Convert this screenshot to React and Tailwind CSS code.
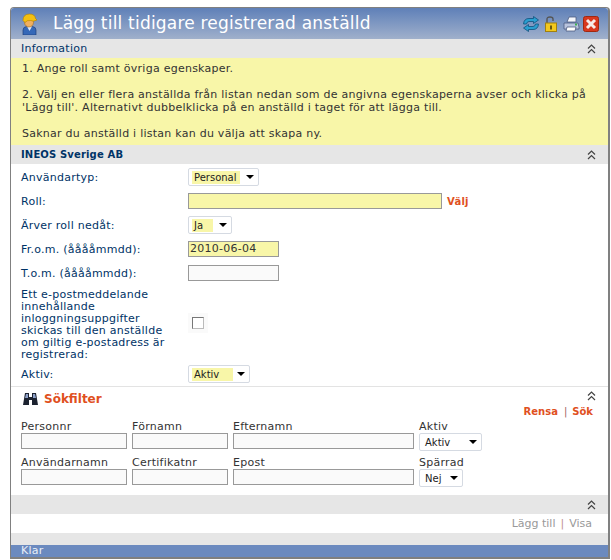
import React from "react";

const Collapse = () => (
  <svg width="9" height="10" viewBox="0 0 9 10" className="block" fill="none" stroke="#444" strokeWidth="1.2">
    <path d="M1 4.5 L4.5 1 L8 4.5" />
    <path d="M1 9 L4.5 5.5 L8 9" />
  </svg>
);

const SectionHead = ({ children, bold }) => (
  <div className={`h-[19px] shrink-0 bg-[#e6e6e6] flex items-center justify-between pl-[10px] pr-[12px] text-[#003366] ${bold ? "font-bold text-[10px] tracking-[0.15px]" : ""}`}>
    <span>{children}</span>
    <Collapse />
  </div>
);

const Worker = () => (
  <svg width="15" height="22" viewBox="0 0 15 22" className="block">
    <path d="M1 22 V17 Q1 14 4.5 13.5 L7.5 16 L10.5 13.5 Q14 14 14 17 V22 Z" fill="#3568b8" stroke="#1f3f78" strokeWidth="0.7" />
    <path d="M5 13.5 L7.5 18 L10 13.5 Z" fill="#dfe8f5" />
    <ellipse cx="7" cy="9.5" rx="4.5" ry="4.5" fill="#f0b060" stroke="#a06820" strokeWidth="0.6" />
    <path d="M1 7.5 Q1 1 7.5 1 Q13 1 13.5 5.5 L15 7 Q11.5 9 8.5 7.5 Q5 7 3 9.5 Z" fill="#f5c010" stroke="#b08000" strokeWidth="0.6" />
  </svg>
);

const Refresh = () => (
  <svg width="16" height="16" viewBox="0 0 16 16" className="block">
    <path d="M0.5 8 Q1 2.5 6 2.5 H10.5 V0.5 L15.5 4 L10.5 7.5 V5.5 H6 Q4 5.5 3.5 8 Z" fill="#2a9fd0" stroke="#10507c" strokeWidth="0.8" />
    <path d="M15.5 8 Q15 13.5 10 13.5 H5.5 V15.5 L0.5 12 L5.5 8.5 V10.5 H10 Q12 10.5 12.5 8 Z" fill="#2a9fd0" stroke="#10507c" strokeWidth="0.8" />
  </svg>
);

const Lock = () => (
  <svg width="12" height="16" viewBox="0 0 12 16" className="block">
    <path d="M2 7 V3 Q2 1 5 1 Q8 1 8 3 V5" fill="none" stroke="#555" strokeWidth="1.4" />
    <rect x="0.5" y="7" width="11" height="8.5" fill="#f2c81e" stroke="#a08010" />
    <rect x="5" y="9.5" width="2" height="4" fill="#6b5a10" />
  </svg>
);

const Printer = () => (
  <svg width="17" height="16" viewBox="0 0 17 16" className="block">
    <path d="M4 6 L6 1 H13 L13 6 Z" fill="#f4f6fb" stroke="#4c5a80" strokeWidth="0.8" />
    <path d="M1 7 H15 L16 11 V13 H1 Z" fill="#b9c4de" stroke="#4c5a80" strokeWidth="0.8" />
    <path d="M4 11 H13 L12 15 H3 Z" fill="#fff" stroke="#4c5a80" strokeWidth="0.8" />
    <rect x="12" y="7.5" width="2" height="2" fill="#40b050" />
  </svg>
);

const Close = () => (
  <svg width="16" height="16" viewBox="0 0 16 16" className="block">
    <rect x="0.5" y="0.5" width="15" height="15" rx="2" fill="#d8381e" stroke="#a02810" />
    <path d="M4 4 L12 12 M12 4 L4 12" stroke="#f6ece8" strokeWidth="3" />
  </svg>
);

const Binoculars = () => (
  <svg width="15" height="14" viewBox="0 0 15 14" className="block">
    <path d="M2 1 H6 V5 H9 V1 H13 L15 13 H9 V8 H6 V13 H0 Z" fill="#1c2230" />
    <path d="M3 2 H5 V6 H2 Z M10 2 H12 L13 6 H10 Z" fill="#8da0c8" />
  </svg>
);

const Arrow = () => (
  <span className="w-0 h-0 border-l-[4px] border-r-[4px] border-t-[4px] border-l-transparent border-r-transparent border-t-black" />
);

// yellow = markerad vald rad, som i originalets select
const Select = ({ value, width, hl, yellow }) => (
  <div className={`h-[18px] rounded-[2px] border border-[#d5dae2] bg-white flex items-center justify-between pl-[3px] pr-[4px] text-[10px] tracking-normal text-[#222] ${width}`}>
    <span className={`h-[13px] leading-[13px] pl-[2px] ${hl} ${yellow ? "bg-[#f8f6a8]" : ""}`}>{value}</span>
    <Arrow />
  </div>
);

const Input = ({ className = "" }) => (
  <div className={`h-[16px] border border-[#999] bg-[#fafafa] ${className}`} />
);

const Row = ({ label, children }) => (
  <div className="grid grid-cols-[167px_1fr] items-center h-[24px]">
    <span className="text-[#003366]">{label}</span>
    <div className="flex items-center">{children}</div>
  </div>
);

const Field = ({ label, children, className = "" }) => (
  <div className={`flex flex-col ${className}`}>
    <span className="h-[13px] leading-[13px] text-[#333]">{label}</span>
    {children}
  </div>
);

export default function App() {
  return (
    <div className="w-[611px] h-[560px] bg-white pt-[7px] pl-[10px] text-[11px] tracking-[0.25px] leading-[13px] overflow-hidden" style={{ fontFamily: '"DejaVu Sans", Verdana, sans-serif' }}>
      <div className="w-[600px] h-[552px] border-l border-r-2 border-t border-b-2 border-[#808080] rounded-t-[4px] flex flex-col">
        {/* TITLE */}
        <div className="h-[31px] shrink-0 bg-gradient-to-b from-[#5f80b8] to-[#a0b0cb] flex items-center pl-[11px] pr-[9px] rounded-t-[3px]">
          <Worker />
          <span className="ml-[16px] text-[17px] text-white leading-none tracking-[0.2px]">Lägg till tidigare registrerad anställd</span>
          <div className="ml-auto flex items-center">
            <Refresh />
            <div className="ml-[6px]"><Lock /></div>
            <div className="ml-[6px]"><Printer /></div>
            <div className="ml-[3px]"><Close /></div>
          </div>
        </div>

        <SectionHead>Information</SectionHead>

        {/* INFO */}
        <div className="h-[87px] shrink-0 bg-[#f8f6a8] pl-[11px] pr-[12px] pt-[4px] text-[#333]">
          <p>1. Ange roll samt övriga egenskaper.</p>
          <p className="mt-[13px]">
            2. Välj en eller flera anställda från listan nedan som de angivna egenskaperna avser och klicka på 'Lägg till'. Alternativt dubbelklicka på en anställd i taget för att lägga till.
          </p>
          <p className="mt-[13px]">Saknar du anställd i listan kan du välja att skapa ny.</p>
        </div>

        <SectionHead bold>INEOS Sverige AB</SectionHead>

        {/* FORM */}
        <div className="pl-[10px] pt-[1px]">
          <Row label="Användartyp:">
            <Select value="Personal" width="w-[71px]" hl="w-[48px]" yellow />
          </Row>
          <Row label="Roll:">
            <div className="w-[254px] h-[16px] border border-[#999] bg-[#f8f6a8]" />
            <span className="ml-[5px] font-bold text-[10px] text-[#e0501e]">Välj</span>
          </Row>
          <Row label="Ärver roll nedåt:">
            <Select value="Ja" width="w-[44px]" hl="w-[21px]" yellow />
          </Row>
          <Row label="Fr.o.m. (ååååmmdd):">
            <div className="w-[91px] h-[16px] border border-[#999] bg-[#f8f6a8] pl-[1px] leading-[14px] text-[#333]">2010-06-04</div>
          </Row>
          <Row label="T.o.m. (ååååmmdd):">
            <Input className="w-[91px]" />
          </Row>
          <div className="grid grid-cols-[167px_1fr] items-center mt-[4px]">
            <span className="text-[#003366] leading-[12px] w-[150px]">
              Ett e-postmeddelande innehållande inloggningsuppgifter skickas till den anställde om giltig e-postadress är registrerad:
            </span>
            <div className="w-[20px] h-[20px] bg-[#fafafa] p-[4px] mb-[4px]">
              <div className="w-[12px] h-[12px] border border-[#777] border-r-[#bbb] border-b-[#bbb] bg-white" />
            </div>
          </div>
          <div className="mt-[1px]">
            <Row label="Aktiv:">
              <Select value="Aktiv" width="w-[62px]" hl="w-[41px]" yellow />
            </Row>
          </div>
        </div>

        {/* SÖKFILTER */}
        <div className="border-t border-[#e3e3e3] h-[109px] shrink-0 pl-[10px] pr-[12px]">
          <div className="flex items-start justify-between pt-[4px]">
            <div className="flex items-center gap-[6px] pt-[1px] pl-[2px]">
              <Binoculars />
              <span className="text-[12px] font-bold tracking-normal text-[#e0501e]">Sökfilter</span>
            </div>
            <Collapse />
          </div>
          <div className="flex justify-end items-center font-bold text-[10px] tracking-normal text-[#e0501e] mt-[-1px] h-[13px] pr-[3px]">
            <span>Rensa</span>
            <span className="ml-[6px] mr-[5px] font-normal text-[#a06060]">|</span>
            <span>Sök</span>
          </div>
          <div className="grid grid-cols-[111px_101px_186px_1fr] mt-[2px]">
            <Field label="Personnr"><Input className="w-[106px]" /></Field>
            <Field label="Förnamn"><Input className="w-[96px]" /></Field>
            <Field label="Efternamn"><Input className="w-[181px]" /></Field>
            <Field label="Aktiv"><Select value="Aktiv" width="w-[63px]" /></Field>
          </div>
          <div className="grid grid-cols-[111px_101px_186px_1fr] mt-[5px]">
            <Field label="Användarnamn"><Input className="w-[106px]" /></Field>
            <Field label="Certifikatnr"><Input className="w-[96px]" /></Field>
            <Field label="Epost"><Input className="w-[181px]" /></Field>
            <Field label="Spärrad"><Select value="Nej" width="w-[44px]" /></Field>
          </div>
        </div>

        <SectionHead />

        <div className="h-[19px] shrink-0 flex items-center justify-end pr-[16px] tracking-normal text-[#999]">
          <span>Lägg till</span>
          <span className="mx-[5px] text-[#c09090]">|</span>
          <span>Visa</span>
        </div>

        <div className="h-[12px] shrink-0 bg-[#e6e6e6]" />

        {/* STATUS */}
        <div className="h-[12px] shrink-0 bg-[#6b8abf] pl-[10px] leading-[12px] text-[#e8eef8]">Klar</div>
      </div>
    </div>
  );
}
